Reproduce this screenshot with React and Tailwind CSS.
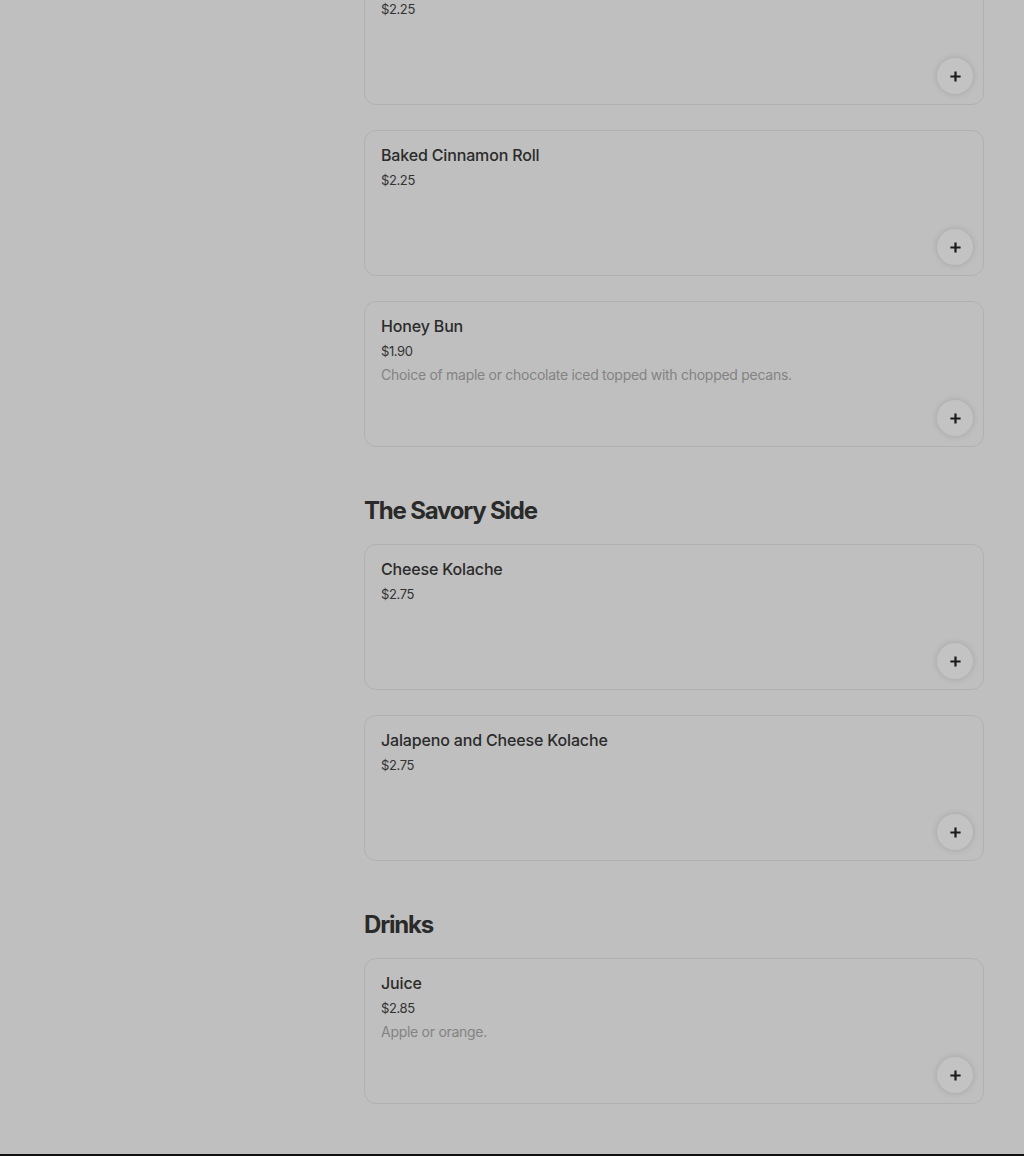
import React from "react";

const sections = [
  {
    title: null,
    items: [
      { name: "Cinnamon Roll", price: "$2.25" },
      { name: "Baked Cinnamon Roll", price: "$2.25" },
      {
        name: "Honey Bun",
        price: "$1.90",
        desc: "Choice of maple or chocolate iced topped with chopped pecans.",
      },
    ],
  },
  {
    title: "The Savory Side",
    items: [
      { name: "Cheese Kolache", price: "$2.75" },
      { name: "Jalapeno and Cheese Kolache", price: "$2.75" },
    ],
  },
  {
    title: "Drinks",
    items: [{ name: "Juice", price: "$2.85", desc: "Apple or orange." }],
  },
];

function Plus() {
  return (
    <svg width="13" height="13" viewBox="0 0 14 14" fill="none">
      <path d="M7 1.5v11M1.5 7h11" stroke="#1c1c1c" strokeWidth="2.4" />
    </svg>
  );
}

function Card({ item }) {
  return (
    <div className="flex h-[146px] flex-col rounded-[12px] border border-[#b1b1b1] bg-[#bfbfbf] pt-3 pl-4 pr-[10px] pb-[10px]">
      <div className="text-[16px] leading-6 font-medium tracking-[-0.01em] text-[#2b2b2b]">{item.name}</div>
      <div className="mt-[3px] text-[13px] leading-5 tracking-[-0.03em] text-[#333333]">{item.price}</div>
      {item.desc && (
        <div className="mt-1 text-[14px] leading-5 tracking-[-0.02em] text-[#838383]">{item.desc}</div>
      )}
      <button className="mt-auto flex h-9 w-9 items-center justify-center self-end rounded-full bg-[#c3c3c3] shadow-[0_0_6px_rgba(0,0,0,0.15)]">
        <Plus />
      </button>
    </div>
  );
}

export default function App() {
  return (
    <div
      className="h-[1156px] overflow-hidden bg-[#bfbfbf]"
      style={{ fontFamily: "Inter, 'Noto Sans', sans-serif" }}
    >
      <div className="-mt-[41px] flex flex-col">
        <div className="flex pb-[50px]">
          <div className="w-[364px] shrink-0" />
          <div className="flex w-[620px] flex-col">
            {sections.map((s, i) => (
              <div key={i} className="flex flex-col">
                {s.title && (
                  <h2 className="mt-12 mb-[17px] text-[24px] leading-8 font-bold tracking-[-0.05em] text-[#2a2a2a]">
                    {s.title}
                  </h2>
                )}
                <div className="flex flex-col gap-[25px]">
                  {s.items.map((it) => (
                    <Card key={it.name} item={it} />
                  ))}
                </div>
              </div>
            ))}
          </div>
        </div>
        <div className="h-[200px] bg-[#101010]" />
      </div>
    </div>
  );
}
